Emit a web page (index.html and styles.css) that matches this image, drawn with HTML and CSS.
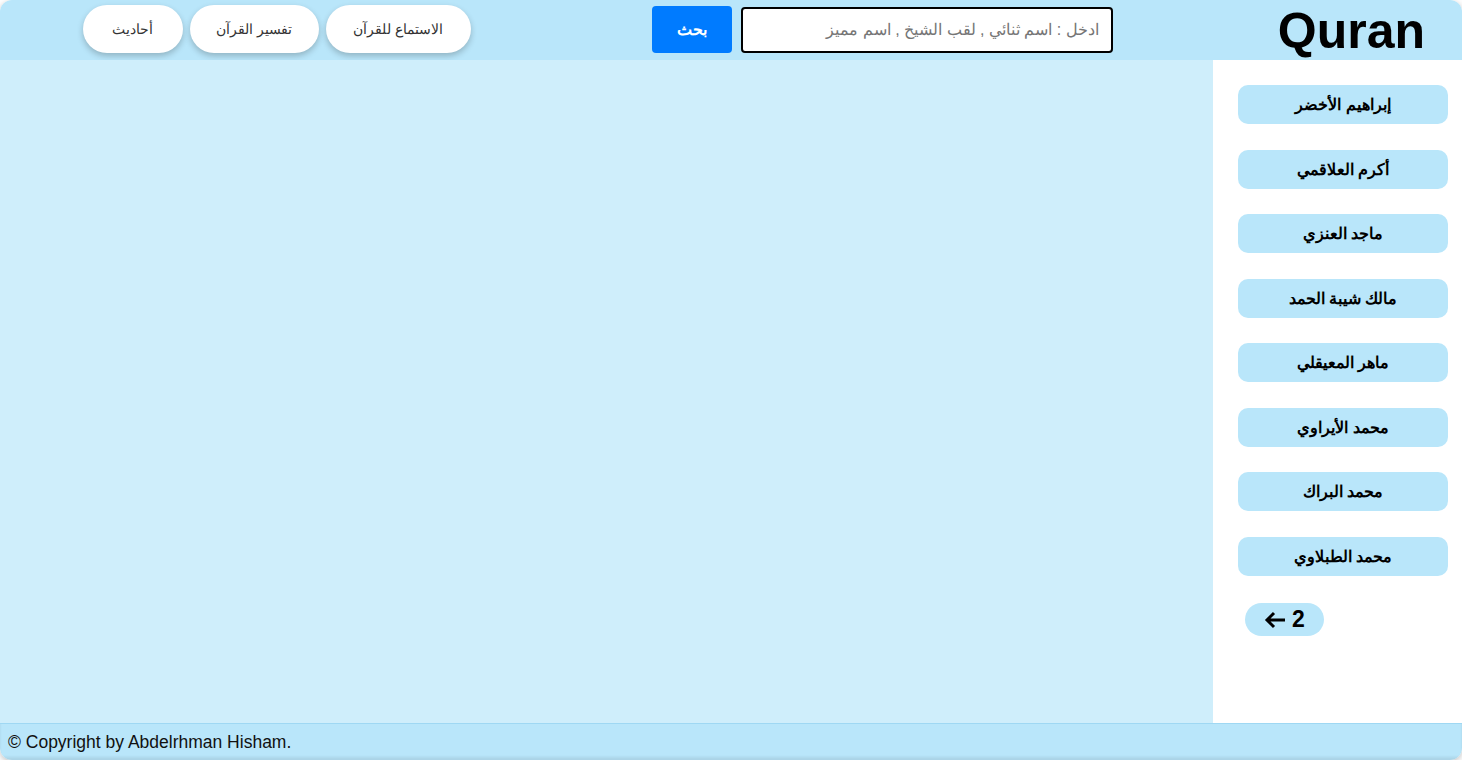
FILE: index.html
```html
<!DOCTYPE html>
<html lang="ar" dir="rtl">
<head>
<meta charset="utf-8">
<title>Quran</title>
<link rel="stylesheet" href="styles.css">
</head>
<body>
<div class="page">
  <header class="header">
    <h1 class="logo" dir="ltr">Quran</h1>
    <form class="search">
      <input class="search-input" type="text" placeholder="ادخل : اسم ثنائي , لقب الشيخ , اسم مميز">
      <button class="search-btn" type="button">بحث</button>
    </form>
    <nav class="nav">
      <a class="nav-btn">الاستماع للقرآن</a>
      <a class="nav-btn">تفسير القرآن</a>
      <a class="nav-btn">أحاديث</a>
    </nav>
  </header>
  <main class="main">
    <aside class="sidebar">
      <a class="reciter">إبراهيم الأخضر</a>
      <a class="reciter">أكرم العلاقمي</a>
      <a class="reciter">ماجد العنزي</a>
      <a class="reciter">مالك شيبة الحمد</a>
      <a class="reciter">ماهر المعيقلي</a>
      <a class="reciter">محمد الأيراوي</a>
      <a class="reciter">محمد البراك</a>
      <a class="reciter">محمد الطبلاوي</a>
      <a class="pager" dir="ltr"><svg class="arrow" width="22" height="18" viewBox="0 0 22 18"><path d="M21 9H3M10 2L3 9l7 7" fill="none" stroke="#000" stroke-width="3" stroke-linecap="butt" stroke-linejoin="miter"/></svg><span>2</span></a>
    </aside>
    <section class="content"></section>
  </main>
  <footer class="footer" dir="ltr">&copy; Copyright by Abdelrhman Hisham.</footer>
</div>
</body>
</html>
```

FILE: styles.css
```css
* { box-sizing: border-box; }
html, body { margin: 0; padding: 0; }
body {
  font-family: "Liberation Sans", Arial, sans-serif;
  background: #ffffff;
  width: 1462px;
  height: 760px;
  overflow: hidden;
}
.page {
  display: flex;
  flex-direction: column;
  height: 760px;
  border-radius: 12px;
  overflow: hidden;
  box-shadow: 0 2px 6px rgba(0, 0, 0, 0.25);
}
.header {
  height: 60px;
  flex: none;
  background: #b9e6fa;
  display: flex;
  align-items: center;
  padding-right: 37px;
}
.logo {
  margin: 0;
  font-size: 50px;
  font-weight: bold;
  color: #000;
  line-height: 1;
  padding-top: 2px;
}
.search {
  display: flex;
  align-items: center;
  gap: 9px;
  margin-right: 165px;
  margin-top: -1px;
}
.search-input {
  width: 372px;
  height: 46px;
  border: 2px solid #000;
  border-radius: 4px;
  padding: 0 12px;
  font-family: "Liberation Sans", Arial, sans-serif;
  font-size: 16px;
  background: #fff;
  direction: rtl;
}
.search-input::placeholder { color: #757575; }
.search-btn {
  width: 80px;
  height: 47px;
  border: none;
  border-radius: 4px;
  background: #007bff;
  color: #fff;
  font-family: "Liberation Sans", Arial, sans-serif;
  font-weight: bold;
  font-size: 16px;
}
.nav {
  display: flex;
  gap: 7px;
  margin-right: 181px;
  margin-top: -2px;
}
.nav-btn {
  height: 48px;
  background: #fff;
  border-radius: 24px;
  display: flex;
  align-items: center;
  justify-content: center;
  font-size: 14px;
  color: #333;
  box-shadow: 0 3px 6px rgba(0, 0, 0, 0.22);
}
.nav-btn:nth-child(1) { width: 145px; }
.nav-btn:nth-child(2) { width: 129px; }
.nav-btn:nth-child(3) { width: 100px; }
.main {
  flex: 1;
  display: flex;
  min-height: 0;
}
.sidebar {
  width: 249px;
  flex: none;
  background: #fff;
  display: flex;
  flex-direction: column;
  align-items: flex-start;
  padding: 25px 14px 0 0;
  gap: 25.5px;
}
.reciter {
  width: 210px;
  height: 39px;
  background: #b9e6fa;
  border-radius: 10px;
  display: flex;
  align-items: center;
  justify-content: center;
  font-size: 16px;
  font-weight: bold;
  color: #000;
}
.pager {
  align-self: flex-end;
  margin-left: 32px;
  margin-top: 2px;
  width: 79px;
  height: 33px;
  border-radius: 17px;
  background: #b9e6fa;
  display: flex;
  align-items: center;
  justify-content: center;
  gap: 6px;
  font-size: 23px;
  font-weight: bold;
  color: #000;
}
.arrow { display: block; }
.footer {
  height: 37px;
  flex: none;
  background: #b9e6fa;
  border-top: 1px solid #9fd8f3;
  padding: 0 8px;
  display: flex;
  align-items: center;
  font-size: 17.5px;
  color: #111;
  box-shadow: inset 0 -3px 3px rgba(0, 0, 0, 0.08);
}
.content {
  flex: 1;
  background: #cfeefb;
}
```
